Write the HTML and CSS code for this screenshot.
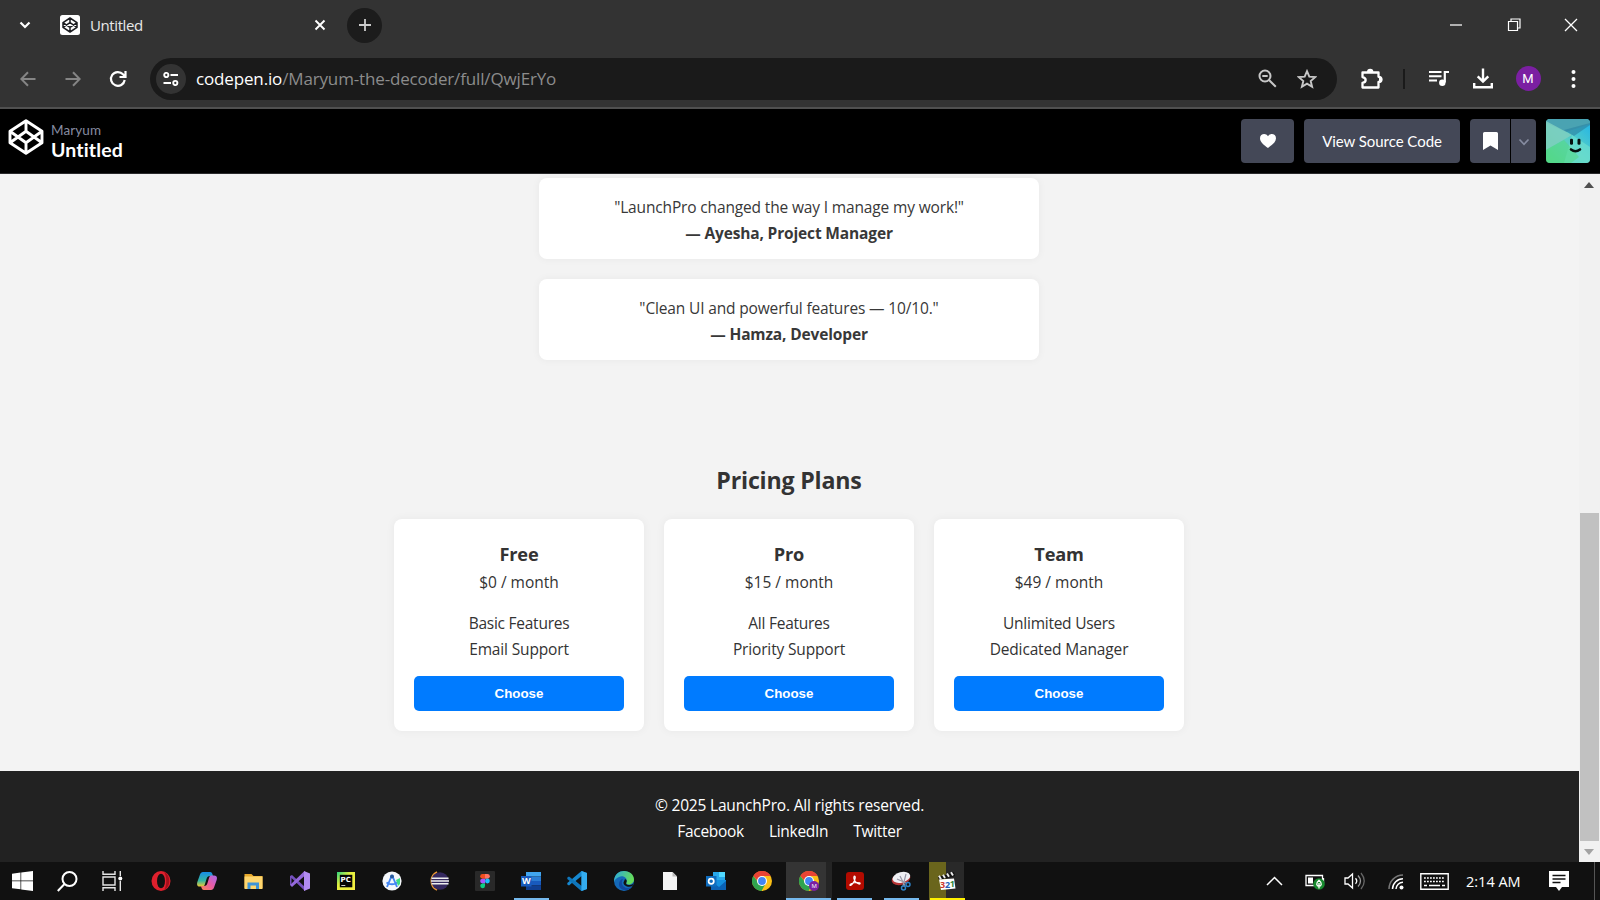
FILE: index.html
```html
<!DOCTYPE html>
<html lang="en">
<head>
<meta charset="utf-8">
<title>Untitled</title>
<link rel="stylesheet" href="styles.css">
</head>
<body>
<div class="screen">
  <header class="browser">
    <div class="tabstrip">
      <svg class="tab-search" width="12" height="8" viewBox="0 0 12 8"><path d="M1.5 1.5 6 6l4.500-4.500" fill="none" stroke="#fff" stroke-width="2.200"/></svg>
      <svg class="favicon" width="20" height="20" viewBox="0 0 20 20"><rect width="20" height="20" rx="2.500" fill="#fff"/><g fill="none" stroke="#1b1c20" stroke-width="1.500" stroke-linejoin="round"><path d="M10 3 17 7.600v4.800L10 17 3 12.400V7.600zM10 3v4.600M10 12.400V17M3 7.600l7 4.800 7-4.800M3 12.400l7-4.800 7 4.800"/></g></svg>
      <span class="tab-title">Untitled</span>
      <svg class="tab-close" width="12" height="12" viewBox="0 0 12 12"><path d="m1.500 1.500 9 9m0-9-9 9" stroke="#fff" stroke-width="1.900"/></svg>
      <span class="new-tab"><svg width="14" height="14" viewBox="0 0 14 14"><path d="M7 1v12M1 7h12" stroke="#ccc" stroke-width="1.800"/></svg></span>
      <div class="window-controls">
        <svg width="14" height="14" viewBox="0 0 14 14"><path d="M1 7h12" stroke="#ddd" stroke-width="1.500"/></svg>
        <svg width="14" height="14" viewBox="0 0 14 14" fill="none" stroke="#fff" stroke-width="1.200"><path d="M1.500 3.500h9v9h-9zM4 3.500v-2.500h9v9h-2.500"/></svg>
        <svg width="14" height="14" viewBox="0 0 14 14"><path d="m1 1 12 12M13 1 1 13" stroke="#fff" stroke-width="1.300"/></svg>
      </div>
    </div>
    <div class="toolbar">
      <svg class="nav-back" width="16" height="16" viewBox="0 0 16 16" fill="none" stroke="#858585" stroke-width="2"><path d="M15.500 8H2M8 1.200 1.300 8 8 14.800"/></svg>
      <svg class="nav-forward" width="16" height="16" viewBox="0 0 16 16" fill="none" stroke="#858585" stroke-width="2"><path d="M.5 8H14M8 1.200 14.700 8 8 14.800"/></svg>
      <svg class="nav-reload" width="18" height="18" viewBox="0 0 18 18" fill="none" stroke="#fff" stroke-width="2.200"><path d="M15.700 10A6.900 6.900 0 1 1 14 4.300l1.800 1.900M16.500 1v6h-6"/></svg>
      <div class="omnibox">
        <span class="site-info"><svg width="16" height="14" viewBox="0 0 16 14" fill="none" stroke="#fff" stroke-width="1.900"><circle cx="3.300" cy="3" r="2.100"/><path d="M7.500 3H15M.5 11H8"/><circle cx="12.300" cy="11" r="2.100"/></svg></span>
        <span class="url"><b>codepen.io</b>/Maryum-the-decoder/full/QwjErYo</span>
        <svg class="zoom-out" width="19" height="19" viewBox="0 0 19 19" fill="none" stroke="#c7c7c7" stroke-width="2"><circle cx="7" cy="7" r="5.500"/><path d="m11 11 6.800 6.800M4.300 7h5.400"/></svg>
        <svg class="bookmark-star" width="20" height="20" viewBox="0 0 20 20"><path d="m10 2.200 2.300 5.400 5.900.5-4.500 3.900 1.400 5.800L10 14.700l-5.100 3.100L6.300 12 1.800 8.100l5.900-.5z" fill="none" stroke="#c7c7c7" stroke-width="1.900"/></svg>
      </div>
      <svg class="extensions" width="23" height="22" viewBox="0 0 23 22"><path d="M2.500 4.500h16v4.300c4 .2 4 5 0 5.200v5.500h-16v-4.600c4.200-.8 4.200-5 0-5.800z" fill="none" stroke="#fff" stroke-width="2.300" stroke-linejoin="round"/><path d="M7 4a3.200 3.200 0 0 1 6.400 0zM19 8.500a3 3 0 0 1 0 6z" fill="#fff"/></svg>
      <span class="tool-divider"></span>
      <svg class="media" width="20" height="17" viewBox="0 0 20 17"><path d="M0 2h12.500M0 6.300h12.500M0 10.600h8" stroke="#fff" stroke-width="2"/><path d="M15.800 12.500V2H20" fill="none" stroke="#fff" stroke-width="2.200"/><circle cx="13.300" cy="12.800" r="3.200" fill="#fff"/></svg>
      <svg class="download" width="20" height="21" viewBox="0 0 20 21" fill="none" stroke="#fff" stroke-width="2.400"><path d="M10 .5v13M4.700 8.300 10 13.600l5.300-5.300M1.200 15v4.300h17.600V15"/></svg>
      <span class="profile">M</span>
      <svg class="kebab" width="5" height="18" viewBox="0 0 5 18" fill="#fff"><circle cx="2.500" cy="2" r="2"/><circle cx="2.500" cy="9" r="2"/><circle cx="2.500" cy="16" r="2"/></svg>
    </div>
  </header>

  <nav class="pen-header">
    <svg class="pen-logo" width="36" height="36" viewBox="0 0 36 36" fill="none" stroke="#fff" stroke-width="2.900" stroke-linejoin="round"><path d="M18 1.700 34 12.300v11.400L18 34.300 2 23.700V12.300zM18 1.700v10.600M18 23.700v10.600M2 12.300l16 11.400 16-11.400M2 23.700l16-11.400 16 11.400"/></svg>
    <div class="pen-titles"><span class="pen-author">Maryum</span><span class="pen-name">Untitled</span></div>
    <div class="pen-actions">
      <span class="pen-btn love"><svg width="16" height="14" viewBox="0 0 16 14"><path d="M8 14C4 11 0 8 0 4.200 0-.2 5.800-1.400 8 2.300c2.200-3.700 8-2.500 8 1.900C16 8 12 11 8 14z" fill="#fff"/></svg></span>
      <span class="pen-btn source">View Source Code</span>
      <span class="pin-group">
        <span class="pen-btn pin"><svg width="15" height="18" viewBox="0 0 15 18"><path d="M1.500 0h12Q15 0 15 1.500V18l-7.500-4.500L0 18V1.500Q0 0 1.500 0z" fill="#fff"/></svg></span>
        <span class="pen-btn more"><svg width="12" height="8" viewBox="0 0 12 8"><path d="m1.500 1.500 4.500 4.800 4.500-4.800" fill="none" stroke="#868ca0" stroke-width="1.700"/></svg></span>
      </span>
      <svg class="avatar" width="44" height="44" viewBox="0 0 44 44"><defs><linearGradient id="av" x1="1" y1="0" x2="0" y2="1"><stop offset="0" stop-color="#1fb2ea"/><stop offset=".5" stop-color="#58cfc4"/><stop offset="1" stop-color="#4fd87c"/></linearGradient></defs><rect width="44" height="44" fill="url(#av)"/><path d="M0 0h44v5L20 13 0 4z" fill="#4aa3b2"/><path d="M0 2 26 16 0 31z" fill="#7fcfc0" opacity=".85"/><path d="M18 11 44 4v2L28 17z" fill="#2f87a5" opacity=".7"/><path d="m26 16 18 12v16H18z" fill="#6edfd0" opacity=".7"/><path d="m0 31 18-10 15 17-8 6H0z" fill="#57d98b" opacity=".6"/><g fill="#06100f"><rect x="24" y="19.700" width="3" height="6" rx="1.300"/><rect x="31.500" y="19.700" width="3" height="6" rx="1.300"/></g><path d="M25 30.500q4.500 3.500 9 0" fill="none" stroke="#06100f" stroke-width="2.600" stroke-linecap="round"/></svg>
    </div>
  </nav>

  <div class="viewport">
    <main class="page">
      <section class="testimonials">
        <div class="testimonial"><p>"LaunchPro changed the way I manage my work!"</p><strong>— Ayesha, Project Manager</strong></div>
        <div class="testimonial"><p>"Clean UI and powerful features — 10/10."</p><strong>— Hamza, Developer</strong></div>
      </section>
      <section class="pricing">
        <h2>Pricing Plans</h2>
        <div class="plans">
          <article class="plan"><h3>Free</h3><p>$0 / month</p><ul><li>Basic Features</li><li>Email Support</li></ul><button>Choose</button></article>
          <article class="plan"><h3>Pro</h3><p>$15 / month</p><ul><li>All Features</li><li>Priority Support</li></ul><button>Choose</button></article>
          <article class="plan"><h3>Team</h3><p>$49 / month</p><ul><li>Unlimited Users</li><li>Dedicated Manager</li></ul><button>Choose</button></article>
        </div>
      </section>
      <footer class="footer">
        <p>© 2025 LaunchPro. All rights reserved.</p>
        <div class="social"><a>Facebook</a><a>LinkedIn</a><a>Twitter</a></div>
      </footer>
    </main>
    <aside class="scrollbar">
      <svg width="10" height="6" viewBox="0 0 10 6"><path d="M5 0l5 6H0z" fill="#505050"/></svg>
      <span class="thumb"></span>
      <svg width="10" height="6" viewBox="0 0 10 6"><path d="M0 0h10L5 6z" fill="#a3a3a3"/></svg>
    </aside>
  </div>

  <div class="taskbar">
    <span class="task start"><svg width="21" height="20" viewBox="0 0 21 20" fill="#fff"><path d="M0 2.800 8.500 1.600v8H0zM9.200 1.500 21 0v9.600H9.200zM0 10.300h8.500v8L0 17.200zM9.200 10.300H21V20L9.200 18.400z"/></svg></span>
    <span class="task find"><svg width="21" height="21" viewBox="0 0 21 21" fill="none" stroke="#fff" stroke-width="2"><circle cx="12.500" cy="8" r="7"/><path d="M7.500 13 .8 20"/></svg></span>
    <span class="task view"><svg width="21" height="20" viewBox="0 0 21 20" fill="none" stroke="#e5e5e5" stroke-width="1.400"><path d="M1 0v3.300h12V0M1 6h12v8H1zM1 20v-3.300h12V20M18.300 0v5M18.300 10v10"/><circle cx="18.300" cy="7.500" r="2" fill="#fff" stroke="none"/></svg></span>
    <span class="task"><svg width="20" height="20" viewBox="0 0 20 20"><ellipse cx="10" cy="10" rx="9.500" ry="10" fill="#df202d"/><path d="M13 1c6 2 8 14 0 18 3-4 3-14 0-18z" fill="#a50f1b"/><ellipse cx="10" cy="10" rx="4" ry="7.300" fill="#111"/></svg></span>
    <span class="task"><svg width="20" height="20" viewBox="0 0 20 20"><defs><linearGradient id="c1" x1="0" y1="0" x2="0" y2="1"><stop offset="0" stop-color="#178ce8"/><stop offset=".6" stop-color="#36b6a0"/><stop offset="1" stop-color="#f1cb32"/></linearGradient><linearGradient id="c2" x1="1" y1="0" x2="0" y2="1"><stop offset="0" stop-color="#a56bea"/><stop offset=".5" stop-color="#e85aa5"/><stop offset="1" stop-color="#fa8754"/></linearGradient></defs><path d="M6 1h7c2 0 2.500 2 3 4h-3c-2 0-3 1-3.500 3L8 13c-.5 2-1.500 2.500-3 2.500H3c-3 0-3.500-2-2.500-5L3 3.500C3.500 2 4.500 1 6 1z" fill="url(#c1)"/><path d="M14 19H7c-2 0-2.500-2-3-4h3c2 0 3-1 3.500-3L12 7c.5-2 1.500-2.500 3-2.500h2c3 0 3.500 2 2.500 5L17 16.500c-.5 1.500-1.500 2.500-3 2.500z" fill="url(#c2)"/></svg></span>
    <span class="task"><svg width="19" height="17" viewBox="0 0 19 17"><path d="M.5 1h7l2 2h9v12H.5z" fill="#e7a92c"/><path d="M.5 3.500h18V16H.5z" fill="#ffd66e"/><path d="M3.500 16V9.500H15V16h-3v-3.500H6.500V16z" fill="#3f94d6"/></svg></span>
    <span class="task"><svg width="20" height="20" viewBox="0 0 20 20"><path d="m0 5 2-1 13 12v4L1.500 7v7L0 14z" fill="#7550bd"/><path d="M0 14 14.500 0v5L2 16z" fill="#9569dc"/><path d="m14 0 6 2.500v15L14 20z" fill="#b28cf2"/></svg></span>
    <span class="task"><svg width="18" height="18" viewBox="0 0 18 18"><defs><linearGradient id="pc" x1="0" y1="0" x2="1" y2="1"><stop offset="0" stop-color="#2bd47f"/><stop offset=".4" stop-color="#e4f03e"/><stop offset="1" stop-color="#f8ee42"/></linearGradient></defs><rect width="18" height="18" fill="url(#pc)"/><rect x="2.800" y="2.800" width="12.500" height="12.500" fill="#050505"/><text x="3.600" y="9.500" class="ico-pc">PC</text><path d="M4.300 13.500h4" stroke="#ccc"/></svg></span>
    <span class="task"><svg width="20" height="20" viewBox="0 0 20 20"><circle cx="10" cy="10" r="9.600" fill="#f4f7fb"/><path d="M10 4 5 16M10 4l5 12M4.500 11.500q5.500 3.500 11 0" fill="none" stroke="#4286f4" stroke-width="1.900"/><circle cx="10" cy="5.500" r="2" fill="#275a9c"/><path d="M14 9l4-2v6l-2 2z" fill="#3ddc84"/></svg></span>
    <span class="task"><svg width="20" height="20" viewBox="0 0 20 20"><path d="M8 1a10 10 0 0 0 0 18" fill="none" stroke="#ee9a35" stroke-width="1.800"/><circle cx="11" cy="10" r="8.800" fill="#34285f"/><path d="M2.500 7.200h17M2 10h18M2.500 12.800h17" stroke="#eee" stroke-width="1.600"/></svg></span>
    <span class="task"><svg width="20" height="20" viewBox="0 0 20 20"><rect width="20" height="20" rx="1" fill="#292929"/><path d="M10 3H7.500a2.300 2.300 0 0 0 0 4.700H10z" fill="#f24e1e"/><path d="M10 3h2.500a2.300 2.300 0 0 1 0 4.700H10z" fill="#ff7262"/><path d="M10 7.700H7.500a2.300 2.300 0 0 0 0 4.700H10z" fill="#a259ff"/><circle cx="12.400" cy="10" r="2.400" fill="#1abcfe"/><path d="M10 12.400H7.500A2.400 2.400 0 1 0 10 15z" fill="#0acf83"/></svg></span>
    <span class="task open"><svg width="20" height="18" viewBox="0 0 20 18"><path d="M5 0h15v4.500H5z" fill="#41a5ee"/><path d="M5 4.500h15V9H5z" fill="#2b7cd3"/><path d="M5 9h15v4.500H5z" fill="#185abd"/><path d="M5 13.500h15V18H5z" fill="#103f91"/><rect y="4" width="10.500" height="10.500" fill="#185abd"/><text x="1" y="12" class="ico-letter">W</text></svg></span>
    <span class="task"><svg width="20" height="20" viewBox="0 0 20 20"><path d="m14.500 0 5.500 2v16l-5.500 2L5.500 11.500 2 14.500.3 13.500V12L14.500 0z" fill="#1688d0"/><path d="M.3 6.500 2 5.500l12.500 9.800V20L.3 8z" fill="#0f76bb"/><path d="m14.500 5-6 5 6 5z" fill="#111"/><path d="m14.500 0 5.500 2v16l-5.500 2z" fill="#34adf1"/></svg></span>
    <span class="task"><svg width="20" height="20" viewBox="0 0 20 20"><defs><linearGradient id="ed" x1="0" y1="0" x2="1" y2=".3"><stop offset="0" stop-color="#2aa7e2"/><stop offset="1" stop-color="#65dc5a"/></linearGradient></defs><circle cx="10" cy="10" r="10" fill="#1469b8"/><path d="M0 9C1 3 5 0 10 0c6 0 10 4 10 8.500 0 3.500-3 5-5.500 5-2 0-3-1-2-2.500C14 7 9 4 5 6c-3 1-4.500 3-5 5z" fill="url(#ed)"/><path d="M9 8c-3 4 0 9 5 9 2 0 4-1 4-1-4 5-13 4-13-3 0-3 2-5 4-5z" fill="#1148a0"/><path d="M11 8c2 1 2 2 1.500 3-1 2 0 3 2 3 2 0 4-.5 5-1.500l-1 2.500c-4 2-9 0-9-3.500z" fill="#111"/></svg></span>
    <span class="task"><svg width="14" height="18" viewBox="0 0 14 18"><path d="M0 0h9.500L14 4.500V18H0z" fill="#f5f5f5"/><path d="M9.500 0v4.500H14z" fill="#bbb"/></svg></span>
    <span class="task"><svg width="20" height="18" viewBox="0 0 20 18"><path d="M7 0h12v9H7z" fill="#28a8ea"/><path d="M13 0h6v5h-6z" fill="#50d9ff"/><path d="M5 8h15v10H5z" fill="#1490df"/><path d="m5 9 8 6 7-6v9H5z" fill="#0a62b5"/><rect y="4" width="10.500" height="10.500" fill="#0f6cbd"/><circle cx="5.200" cy="9.200" r="2.600" fill="none" stroke="#fff" stroke-width="1.700"/></svg></span>
    <span class="task"><svg width="20" height="20" viewBox="0 0 20 20"><circle cx="10" cy="10" r="10" fill="#fbbf16"/><path d="M1.300 5a10 10 0 0 1 17.400 0H10v10z" fill="#e94335"/><path d="M1.300 5A10 10 0 0 0 9.500 20l4.500-8-8-1z" fill="#2fa44f"/><circle cx="10" cy="10" r="5" fill="#fff"/><circle cx="10" cy="10" r="3.900" fill="#4285f4"/></svg></span>
    <span class="task open active"><svg width="20" height="20" viewBox="0 0 20 20"><circle cx="10" cy="10" r="10" fill="#fbbf16"/><path d="M1.300 5a10 10 0 0 1 17.400 0H10v10z" fill="#e94335"/><path d="M1.300 5A10 10 0 0 0 9.500 20l4.500-8-8-1z" fill="#2fa44f"/><circle cx="10" cy="10" r="5" fill="#fff"/><circle cx="10" cy="10" r="3.900" fill="#4285f4"/><circle cx="15" cy="15" r="5" fill="#7b1fa2"/><text x="12.500" y="17.300" class="ico-m">M</text></svg></span>
    <span class="task open"><svg width="18" height="18" viewBox="0 0 18 18"><rect width="18" height="18" rx="3" fill="#b30b00"/><path d="M8.500 4c1 0 1 2 0 4.500C7 12 4.500 14 4 13.300c-.6-1 3-2.700 6.500-2.800 3-.1 4 .7 3.500 1.300-1 1-5-1.300-6-5-.3-1.500 0-2.800.5-2.800z" fill="none" stroke="#fff" stroke-width="1.200"/></svg></span>
    <span class="task open"><svg width="20" height="20" viewBox="0 0 20 20"><ellipse cx="10" cy="8" rx="9.500" ry="5.800" fill="#b83535" transform="rotate(-15 10 8)"/><ellipse cx="10.500" cy="6.500" rx="9" ry="5.200" fill="#f0f0f4" transform="rotate(-15 10 7)"/><path d="m9 5 5 10M15 3l-3 12M6 8l9 4" stroke="#99a" stroke-width="1.200"/><g fill="none" stroke="#2e82c7" stroke-width="1.500"><circle cx="12.500" cy="17" r="2"/><circle cx="17" cy="13.500" r="2"/></g></svg></span>
    <span class="task open alert"><svg width="20" height="20" viewBox="0 0 20 20"><path d="m1 6 16-5 1 4L2 9z" fill="#111"/><path d="m2 4.800 2 3.500M6 3.700l2 3.400M10 2.500l2 3.300M14 1.300l2 3.300" stroke="#eee" stroke-width="1.900"/><path d="m2 8.500 15-1 1.500 10L4 19z" fill="#fff"/><g class="ico-count"><text x="3" y="17" fill="#cc392e">3</text><text x="8" y="16.600" fill="#2360b8">2</text><text x="12.700" y="16" fill="#318a3b">1</text></g></svg></span>
    <div class="tray">
      <svg class="t-chevron" width="17" height="10" viewBox="0 0 17 10"><path d="m1 9 7.500-7.500L16 9" fill="none" stroke="#fff" stroke-width="1.500"/></svg>
      <svg class="t-battery" width="20" height="16" viewBox="0 0 20 16"><path d="M1 1.500h16.500v10H1zM18.500 4v5" fill="none" stroke="#fff" stroke-width="1.300"/><path d="M3 3.500h5v6H3z" fill="#fff"/><circle cx="14" cy="10" r="5.800" fill="#16892d"/><path d="M14 6.300c3.500 3 2.500 6 0 6s-3.500-3 0-6zM14 9v5.500" fill="none" stroke="#fff" stroke-width="1.300"/></svg>
      <svg class="t-volume" width="21" height="18" viewBox="0 0 21 18" fill="none" stroke="#fff" stroke-width="1.300"><path d="M1 6h3l4.500-4v14L4 12H1z"/><path d="M11.500 6.300q2.500 2.700 0 5.400"/><path d="M14 3.500q5 5.500 0 11" stroke="#999"/><path d="M17 1q6.500 8 0 16" stroke="#666"/></svg>
      <svg class="t-wifi" width="16" height="16" viewBox="0 0 16 16" fill="none" stroke="#fff" stroke-width="1.500"><path d="M1 15A14 14 0 0 1 15 1" stroke="#777"/><path d="M4.500 15A10.500 10.500 0 0 1 15 4.800M8 15a7 7 0 0 1 7-6.700"/><circle cx="13.500" cy="13.500" r="2" fill="#fff" stroke="none"/></svg>
      <svg class="t-keyboard" width="29" height="17" viewBox="0 0 29 17" fill="none" stroke="#fff" stroke-width="1.400"><path d="M.8.800h27.400v15.400H.8z"/><path d="M4 5h21M4 8.500h21" stroke-dasharray="1.800 1.200"/><path d="M4 12.500h3M9 12.500h11M22 12.500h3"/></svg>
      <span class="clock">2:14 AM</span>
      <svg class="t-notes" width="20" height="20" viewBox="0 0 20 20"><path d="M0 0h20v16h-7l-3 4-3-4H0z" fill="#fff"/><path d="M3.500 4.500h13M3.500 8h13M3.500 11.500h8" stroke="#111" stroke-width="1.300"/></svg>
      <span class="show-desktop"></span>
    </div>
  </div>
</div>
</body>
</html>
```
FILE: styles.css
```css
* { box-sizing: border-box; margin: 0; padding: 0; }
body { font-family: "Open Sans", "Noto Sans", sans-serif; background: #111; overflow: hidden; }
svg { display: block; flex: none; }
.screen { width: 1600px; height: 900px; display: flex; flex-direction: column; overflow: hidden; }

/* Browser chrome */
.browser { height: 109px; flex: none; background: #333; border-bottom: 2px solid #505050; }
.tabstrip { height: 50px; display: flex; align-items: center; padding-left: 19px; }
.favicon { margin-left: 29px; }
.tab-title { width: 224px; margin-left: 10px; font-size: 15px; letter-spacing: -0.400px; color: #e8e8e8; white-space: nowrap; }
.tab-close { flex: none; }
.new-tab { width: 35px; height: 35px; margin-left: 21px; flex: none; border-radius: 50%; background: #1c1c1c; display: flex; align-items: center; justify-content: center; }
.window-controls { margin-left: auto; margin-right: 22px; display: flex; gap: 43.500px; }
.toolbar { height: 57px; display: flex; align-items: center; padding-left: 20px; }
.nav-forward { margin-left: 28.500px; }
.nav-reload { margin-left: 28px; }
.omnibox { width: 1187px; height: 42px; margin-left: 23.500px; padding-left: 6px; flex: none; border-radius: 21px; background: #1a1a1a; display: flex; align-items: center; }
.site-info { width: 30px; height: 30px; border-radius: 50%; background: #333; display: flex; align-items: center; justify-content: center; }
.url { margin-left: 10px; width: 1062px; font-size: 17px; letter-spacing: -0.150px; color: #8c8c8c; white-space: nowrap; }
.url b { font-weight: 400; color: #fff; }
.bookmark-star { margin-left: 20px; }
.extensions { margin-left: 22.500px; }
.tool-divider { width: 2px; height: 20px; margin-left: 20px; background: #1a1a1a; }
.media { margin-left: 24px; }
.download { margin-left: 24px; }
.profile { width: 25px; height: 25px; margin-left: 23px; border-radius: 50%; background: #7b1fa2; color: #fff; font: 13px/25px Roboto, sans-serif; text-align: center; }
.kebab { margin-left: 30px; }

/* Pen header */
.pen-header { height: 65px; flex: none; background: #000; display: flex; padding: 10px 10px 0 8px; font-family: Lato, sans-serif; border-bottom: 1px solid #2a2a2c; }
.pen-titles { display: flex; flex-direction: column; margin-left: 7px; padding-top: 2px; }
.pen-author { font-size: 13.500px; line-height: 18px; color: #868ca0; letter-spacing: .1px; }
.pen-name { font-size: 19.500px; line-height: 22px; font-weight: 700; letter-spacing: .150px; color: #fff; }
.pen-actions { margin-left: auto; display: flex; gap: 10px; height: 44px; }
.pen-btn { height: 44px; border-radius: 4px; background: #444857; color: #fff; display: flex; align-items: center; justify-content: center; padding-bottom: 1px; }
.love { width: 53px; }
.source { width: 156px; font-size: 15px; letter-spacing: -0.050px; white-space: nowrap; }
.pin-group { display: flex; gap: 1px; }
.pin { width: 40px; border-radius: 4px 0 0 4px; }
.more { width: 25px; border-radius: 0 4px 4px 0; padding: 2px 0 0; }
.avatar { border-radius: 4px; }

/* Page */
.viewport { height: 688px; flex: none; display: flex; background: #222; }
.page { width: 1579px; padding-right: 1px; background: #f3f3f3; color: #383838; font-size: 15.500px; line-height: 25.600px; letter-spacing: -0.150px; text-align: center; display: flex; flex-direction: column; }
.testimonials { padding-top: 4px; display: flex; flex-direction: column; align-items: center; gap: 20px; }
.testimonial { width: 500px; height: 81.200px; padding: 17px 15px 0; border-radius: 8px; background: #fff; box-shadow: 0 0 8px rgba(0,0,0,.05); }
.testimonial strong { display: block; font-weight: 700; }
.pricing { padding-top: 100px; color: #333; }
.pricing h2 { height: 58.600px; line-height: 40px; font-size: 23.200px; letter-spacing: -0.200px; }
.plans { display: flex; justify-content: center; gap: 20px; }
.plan { width: 250px; height: 212px; padding: 20px; border-radius: 8px; background: #fff; box-shadow: 0 0 10px rgba(0,0,0,.05); }
.plan h3 { height: 31.500px; font-size: 18.200px; line-height: 30px; letter-spacing: -0.200px; }
.plan p { letter-spacing: 0; }
.plan ul { list-style: none; margin: 15px 0 13.500px; }
.plan li:first-child { letter-spacing: -0.250px; }
.plan button { display: block; width: 100%; height: 35px; border: 0; border-radius: 5px; background: #007bff; color: #fff; font: 700 13.333px/35px "Liberation Sans", sans-serif; }
.footer { margin: auto -1px 0 0; height: 91px; padding: 22px 0 0; background: #222; color: #fff; letter-spacing: -0.190px; }
.social { display: flex; justify-content: center; gap: 25px; letter-spacing: -0.300px; }
.scrollbar { width: 21px; background: #f1f1f1; display: flex; flex-direction: column; align-items: center; padding: 8px 1px 7px 0; }
.thumb { width: 19px; height: 328.500px; margin: auto 0 8px; background: #c1c1c1; }

/* Taskbar */
.taskbar { height: 38px; flex: none; background: #111; display: flex; }
.task { width: 46.250px; height: 38px; flex: none; display: flex; align-items: center; justify-content: center; position: relative; }
.start { width: 45px; }
.find { width: 45px; }
.view { width: 44px; margin-right: 4px; }
.open::after { content: ""; position: absolute; bottom: 0; left: 5.500px; width: 35px; height: 2.500px; background: #76b9ed; }
.active { background: linear-gradient(90deg, #343434 40px, #242424 40px); }
.active::after { left: 0; width: 45px; }
.alert { background: linear-gradient(90deg, transparent 5px, #6a651c 5px 22px, #292929 22px 40px, transparent 40px); }
.alert::after { background: #fff100; }
.ico-pc { font: 700 7px "DejaVu Sans", sans-serif; fill: #fff; }
.ico-letter { font: 700 9px "Open Sans", sans-serif; fill: #fff; }
.ico-m { font: 6px "Open Sans", sans-serif; fill: #fff; }
.ico-count { font: 700 9px "Open Sans", sans-serif; }
.tray { margin-left: auto; display: flex; align-items: center; color: #fff; }
.t-battery { margin-left: 22.500px; margin-top: 2px; }
.t-volume { margin-left: 18.500px; }
.t-wifi { margin-left: 23.500px; margin-top: 2px; }
.t-keyboard { margin-left: 16px; }
.clock { width: 73px; margin-left: 17px; padding-top: 1px; font-size: 14.500px; white-space: nowrap; }
.t-notes { margin-left: 10px; }
.show-desktop { width: 1px; height: 38px; margin: 0 5px 0 25px; background: #555; }
```
